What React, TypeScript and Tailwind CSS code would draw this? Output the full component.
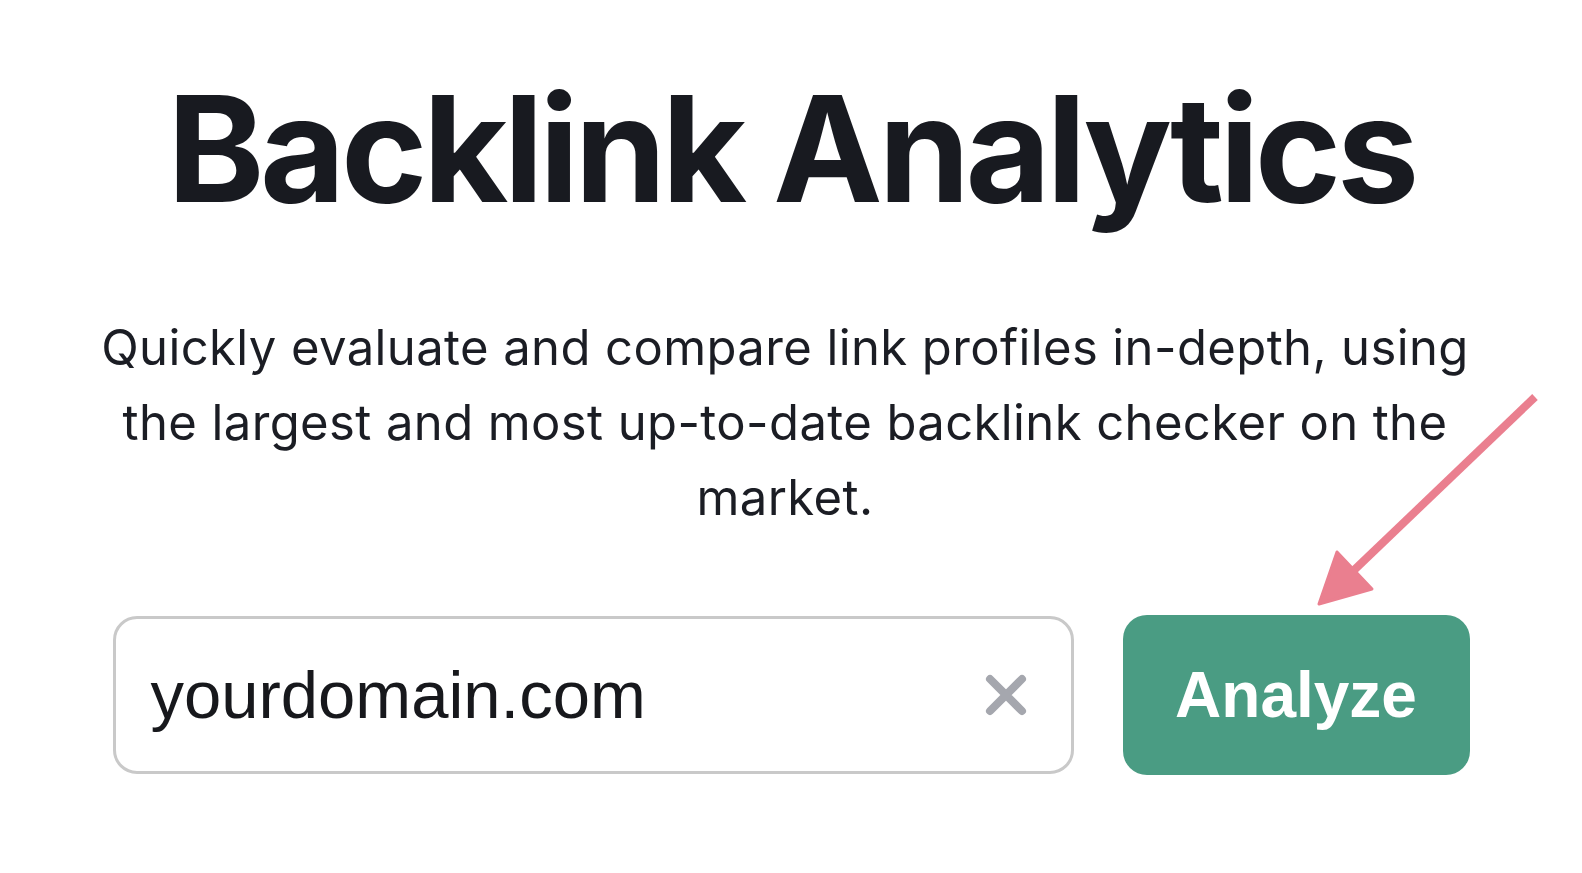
import React from "react";

export default function App() {
  return (
    <div className="relative w-[1582px] h-[873px] overflow-hidden bg-white">
      <h1
        className="pt-[75px] text-center text-[147px] font-bold leading-none tracking-[-0.03em] text-[#181a20]"
        style={{ fontFamily: "Inter, 'Noto Sans', sans-serif" }}
      >
        Backlink Analytics
      </h1>
      <p
        className="mt-[88px] pr-[12px] text-center text-[49px] leading-[75px] tracking-[0.008em] text-[#1b1d24]"
        style={{ fontFamily: "Inter, 'Noto Sans', sans-serif" }}
      >
        Quickly evaluate and compare link profiles in-depth, using
        <br />
        the largest and most up-to-date backlink checker on the
        <br />
        market.
      </p>
      <div className="mt-[80px] flex items-center justify-center gap-[49px]">
        <div className="flex h-[158px] w-[961px] items-center justify-between rounded-[24px] border-[3px] border-[#c9c9c9] pl-[35px] pr-[44px]">
          <span
            className="text-[67px] text-[#17181c]"
            style={{ fontFamily: "'Liberation Sans', Arial, sans-serif" }}
          >
            yourdomain.com
          </span>
          <svg width="42" height="42" viewBox="0 0 42 42">
            <path
              d="M5 5 L37 37 M37 5 L5 37"
              stroke="#a5a7ae"
              strokeWidth="8"
              strokeLinecap="round"
              fill="none"
            />
          </svg>
        </div>
        <button
          className="flex h-[160px] w-[347px] items-center justify-center rounded-[24px] bg-[#4a9c83] text-[64px] font-bold text-white"
          style={{ fontFamily: "'Liberation Sans', Arial, sans-serif" }}
        >
          Analyze
        </button>
      </div>
      <svg
        className="pointer-events-none absolute left-0 top-0"
        width="1582"
        height="873"
        viewBox="0 0 1582 873"
      >
        <line
          x1="1535"
          y1="397"
          x2="1350"
          y2="574"
          stroke="#ea7f8f"
          strokeWidth="8"
        />
        <polygon
          points="1319,604 1337,552 1372,589"
          fill="#ea7f8f"
          stroke="#ea7f8f"
          strokeWidth="3"
          strokeLinejoin="round"
        />
      </svg>
    </div>
  );
}
